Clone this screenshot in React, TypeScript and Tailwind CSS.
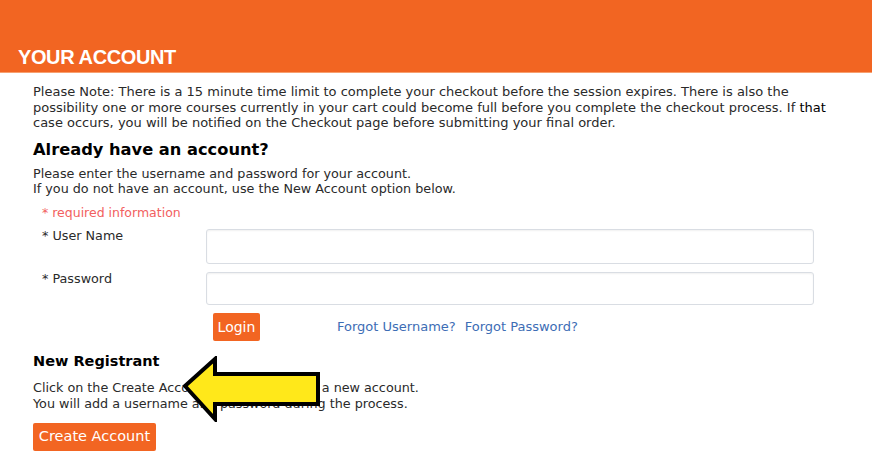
import React from "react";

function Arrow() {
    return (
        <svg
            width="140"
            height="66"
            viewBox="0 0 140 66"
            className="absolute left-[182px] top-[356px]"
        >
            <path
                d="M3 30 L33 3 L33 18 L136 18 L136 48 L33 48 L33 63 Z"
                fill="#ffe81a"
                stroke="#000"
                strokeWidth="4"
                strokeLinejoin="miter"
            />
        </svg>
    );
}

export default function App() {
    return (
        <div
            className="relative w-[872px] h-[472px] bg-white text-[#2a2a2a] overflow-hidden"
            style={{ fontFamily: '"DejaVu Sans", Verdana, sans-serif' }}
        >
            {/* Header */}
            <div className="h-[73px] bg-[#f26522] flex items-end px-[18px] pb-[3px] border-b border-[#f7a070]">
                <h1
                    className="text-white font-bold text-[20px] leading-[24px] tracking-[-0.4px]"
                    style={{ fontFamily: '"Liberation Sans", Arial, sans-serif' }}
                >
                    YOUR ACCOUNT
                </h1>
            </div>

            <div className="pl-[33px] pr-[30px] pt-[11px]">
                <p className="text-[13px] leading-[15.5px] whitespace-nowrap">
                    Please Note: There is a 15 minute time limit to complete your checkout before the session expires. There is also the
                    <br />
                    possibility one or more courses currently in your cart could become full before you complete the checkout process. If <span className="text-black">that</span>
                    <br />
                    case occurs, you will be notified on the Checkout page before submitting your final order.
                </p>

                <h2 className="mt-[10px] text-[16.25px] leading-[18px] font-bold text-black">Already have an account?</h2>

                <p className="mt-[7px] text-[12.75px] leading-[15px]">
                    Please enter the username and password for your account.
                    <br />
                    If you do not have an account, use the New Account option below.
                </p>

                <div className="pl-[9px] mt-[10px] text-[12.5px] leading-[14px] text-[#f26060]">* required information</div>

                <div className="mt-[9px] grid grid-cols-[173px_608px] gap-y-[8px] items-start">
                    <label className="pl-[9px] text-[12.75px] leading-[14px]">* User Name</label>
                    <input className="h-[35px] border border-[#d9dde3] rounded-[3px] shadow-[inset_0_1px_2px_rgba(0,0,0,0.06)] outline-none" />
                    <label className="pl-[9px] text-[12.75px] leading-[14px]">* Password</label>
                    <input type="password" className="h-[33px] border border-[#d9dde3] rounded-[3px] shadow-[inset_0_1px_2px_rgba(0,0,0,0.06)] outline-none" />
                </div>

                <div className="mt-[8px] flex items-center pl-[180px]">
                    <button className="w-[47px] h-[28px] bg-[#f26522] text-white text-[14px] leading-none rounded-[2px]">
                        Login
                    </button>
                    <div className="ml-[77px] text-[13px] text-[#3d6db5] flex gap-[9px] pt-[1px]">
                        <a>Forgot Username?</a>
                        <a>Forgot Password?</a>
                    </div>
                </div>

                <h2 className="mt-[11px] text-[14.5px] leading-[18px] font-bold text-black">New Registrant</h2>

                <p className="mt-[10px] text-[12.75px] leading-[16px]">
                    Click on the Create Account button to create a new account.
                    <br />
                    You will add a username and password during the process.
                </p>

                <button className="mt-[11px] w-[123px] h-[28px] bg-[#f26522] text-white text-[14.5px] leading-none rounded-[2px]">
                    Create Account
                </button>
            </div>

            <Arrow />
        </div>
    );
}
